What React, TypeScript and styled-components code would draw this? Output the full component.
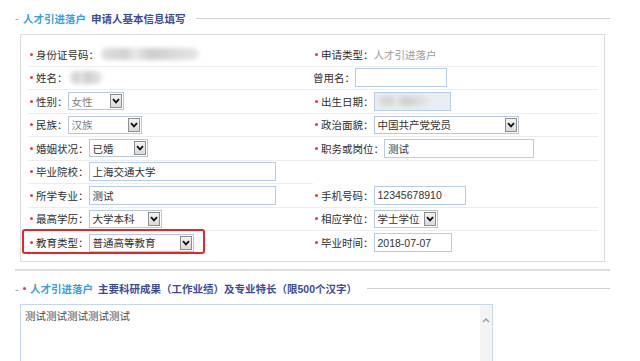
import styled, { createGlobalStyle } from "styled-components";

const GlobalStyle = createGlobalStyle`
  body {
    margin: 0;
    background: #ffffff;
    font-family: "Liberation Sans", "Noto Sans CJK SC", sans-serif;
    color: #333333;
  }
`;

const Page = styled.div`
  width: 595px;
  padding: 10px 0 0 15px;
`;

const Fieldset = styled.div`
  border-bottom: 2px solid #dedede;
  padding-bottom: 7px;
`;

const Legend = styled.div`
  display: flex;
  align-items: center;
  height: 16px;
  font-size: 10.5px;
  font-weight: bold;
`;

const Dash = styled.span`
  color: #9a9a9a;
  font-weight: normal;
  width: 8px;
`;

const Dot = styled.span`
  width: 3px;
  height: 3px;
  border-radius: 50%;
  background: #e8393d;
  margin-right: 4px;
`;

const TitleLight = styled.span`
  color: #3b9ee0;
  font-family: "Noto Sans CJK SC", sans-serif;
`;

const TitleDark = styled.span`
  color: #3e4c97;
  margin-left: 5px;
  font-family: "Liberation Sans", "Noto Sans CJK SC", sans-serif;
`;

const Rule = styled.span`
  flex: 1;
  height: 1px;
  background: #cfcfcf;
  margin-left: 10px;
`;

const Panel = styled.div`
  margin: 8px 5px 0 5px;
  border: 1px solid #dcdcdc;
  padding: 8px 6px 6px 7px;
  display: grid;
  grid-template-columns: 285px 285px;
`;

const Cell = styled.div<{ $noLine?: boolean }>`
  position: relative;
  display: flex;
  align-items: center;
  height: 23.5px;
  box-sizing: border-box;
  border-bottom: ${(p) => (p.$noLine ? "none" : "1px solid #ededed")};
`;

const Bullet = styled.span`
  width: 3px;
  height: 3px;
  border-radius: 50%;
  margin: 0 3px 0 2px;
  background: #e8393d;
  flex-shrink: 0;
`;

const Label = styled.span`
  font-family: "Noto Sans CJK SC", sans-serif;
  font-size: 10.5px;
  color: #2e2e2e;
  white-space: nowrap;
`;

const Plain = styled.span`
  font-family: "Noto Sans CJK SC", sans-serif;
  font-size: 10.5px;
  color: #9c9c9c;
`;

const Blurred = styled.span<{ $w: number; $h: number; $ml?: number }>`
  display: inline-block;
  width: ${(p) => p.$w}px;
  height: ${(p) => p.$h}px;
  margin-left: ${(p) => p.$ml ?? 0}px;
  border-radius: 6px;
  background: linear-gradient(
    90deg,
    #dedede 0%,
    #d2d2d2 25%,
    #e9e9e9 35%,
    #cdcdcd 50%,
    #dadada 75%,
    #e6e6e6 100%
  );
  filter: blur(2px);
`;

const Input = styled.div<{ $w: number; $shade?: boolean }>`
  display: flex;
  align-items: center;
  width: ${(p) => p.$w}px;
  height: 19px;
  box-sizing: border-box;
  border: 1px solid #b7cde6;
  background: ${(p) => (p.$shade ? "#e9eef5" : "#ffffff")};
  padding-left: 3px;
  font-size: 10.5px;
  color: #333333;
  white-space: nowrap;
  overflow: hidden;
`;

const Select = styled.div<{ $w: number; $muted?: boolean }>`
  display: flex;
  align-items: center;
  width: ${(p) => p.$w}px;
  height: 18px;
  box-sizing: border-box;
  border: 1px solid #b9c8d9;
  background: #ffffff;
  padding: 0 1px 0 3px;
  font-family: "Noto Sans CJK SC", sans-serif;
  font-size: 10.5px;
  color: ${(p) => (p.$muted ? "#808080" : "#333333")};
  white-space: nowrap;
`;

const SelectText = styled.span`
  flex: 1;
  overflow: hidden;
`;

const DropButton = styled.span`
  display: flex;
  align-items: center;
  justify-content: center;
  width: 12px;
  height: 14px;
  box-sizing: border-box;
  border: 1px solid #8d8d8d;
  background: linear-gradient(#f3f3f3, #dadada);
  flex-shrink: 0;
`;

const Highlight = styled.span`
  position: absolute;
  left: -6px;
  top: -2px;
  width: 183px;
  height: 25px;
  box-sizing: border-box;
  border: 2px solid #e3262b;
  border-radius: 3px;
  pointer-events: none;
`;

const SecondLegend = styled(Legend)`
  margin-top: 10px;
`;

const TextBox = styled.div`
  display: flex;
  margin: 7px 0 0 5px;
  width: 473px;
  height: 70px;
  box-sizing: border-box;
  border: 1px solid #c6d7ea;
  border-bottom: none;
`;

const TextContent = styled.div`
  flex: 1;
  padding: 3px 4px;
  font-family: "Noto Sans CJK SC", sans-serif;
  font-size: 10.5px;
  color: #4a4a4a;
`;

const ScrollTrack = styled.div`
  width: 12px;
  background: #f4f4f4;
  display: flex;
  justify-content: center;
  padding-top: 13px;
  box-sizing: border-box;
`;

function Chevron() {
  return (
    <svg width="8" height="6" viewBox="0 0 8 6">
      <polyline points="1,1.2 4,4.4 7,1.2" fill="none" stroke="#111" strokeWidth="1.8" />
    </svg>
  );
}

function Drop(props: { w: number; value: string; muted?: boolean }) {
  return (
    <Select $w={props.w} $muted={props.muted}>
      <SelectText>{props.value}</SelectText>
      <DropButton>
        <Chevron />
      </DropButton>
    </Select>
  );
}

export default function App() {
  return (
    <Page>
      <GlobalStyle />
      <Fieldset>
        <Legend>
          <Dash>-</Dash>
          <TitleLight>人才引进落户</TitleLight>
          <TitleDark>申请人基本信息填写</TitleDark>
          <Rule />
        </Legend>
        <Panel>
          <Cell>
            <Bullet />
            <Label>身份证号码：</Label>
            <Blurred $w={98} $h={12} $ml={2} />
          </Cell>
          <Cell>
            <Bullet />
            <Label>申请类型：</Label>
            <Plain>人才引进落户</Plain>
          </Cell>

          <Cell>
            <Bullet />
            <Label>姓名：</Label>
            <Blurred $w={32} $h={13} $ml={2} />
          </Cell>
          <Cell>
            <Label>曾用名：</Label>
            <Input $w={92} />
          </Cell>

          <Cell>
            <Bullet />
            <Label>性别：</Label>
            <Drop w={56} value="女性" muted />
          </Cell>
          <Cell>
            <Bullet />
            <Label>出生日期：</Label>
            <Input $w={77} $shade>
              <Blurred $w={52} $h={10} />
            </Input>
          </Cell>

          <Cell>
            <Bullet />
            <Label>民族：</Label>
            <Drop w={74} value="汉族" muted />
          </Cell>
          <Cell>
            <Bullet />
            <Label>政治面貌：</Label>
            <Drop w={145} value="中国共产党党员" />
          </Cell>

          <Cell>
            <Bullet />
            <Label>婚姻状况：</Label>
            <Drop w={59} value="已婚" />
          </Cell>
          <Cell>
            <Bullet />
            <Label>职务或岗位：</Label>
            <Input $w={150}>测试</Input>
          </Cell>

          <Cell>
            <Bullet />
            <Label>毕业院校：</Label>
            <Input $w={187}>上海交通大学</Input>
          </Cell>
          <Cell $noLine />

          <Cell>
            <Bullet />
            <Label>所学专业：</Label>
            <Input $w={187}>测试</Input>
          </Cell>
          <Cell>
            <Bullet />
            <Label>手机号码：</Label>
            <Input $w={92}>12345678910</Input>
          </Cell>

          <Cell>
            <Bullet />
            <Label>最高学历：</Label>
            <Drop w={73} value="大学本科" />
          </Cell>
          <Cell>
            <Bullet />
            <Label>相应学位：</Label>
            <Drop w={64} value="学士学位" />
          </Cell>

          <Cell $noLine>
            <Bullet />
            <Label>教育类型：</Label>
            <Drop w={105} value="普通高等教育" />
            <Highlight />
          </Cell>
          <Cell $noLine>
            <Bullet />
            <Label>毕业时间：</Label>
            <Input $w={78}>2018-07-07</Input>
          </Cell>
        </Panel>
      </Fieldset>

      <SecondLegend>
        <Dash>-</Dash>
        <Dot />
        <TitleLight>人才引进落户</TitleLight>
        <TitleDark>主要科研成果（工作业绩）及专业特长（限500个汉字）</TitleDark>
        <Rule />
      </SecondLegend>
      <TextBox>
        <TextContent>测试测试测试测试测试</TextContent>
        <ScrollTrack>
          <svg width="8" height="5" viewBox="0 0 8 5">
            <polyline points="1,4 4,1 7,4" fill="none" stroke="#9a9a9a" strokeWidth="1.3" />
          </svg>
        </ScrollTrack>
      </TextBox>
    </Page>
  );
}
